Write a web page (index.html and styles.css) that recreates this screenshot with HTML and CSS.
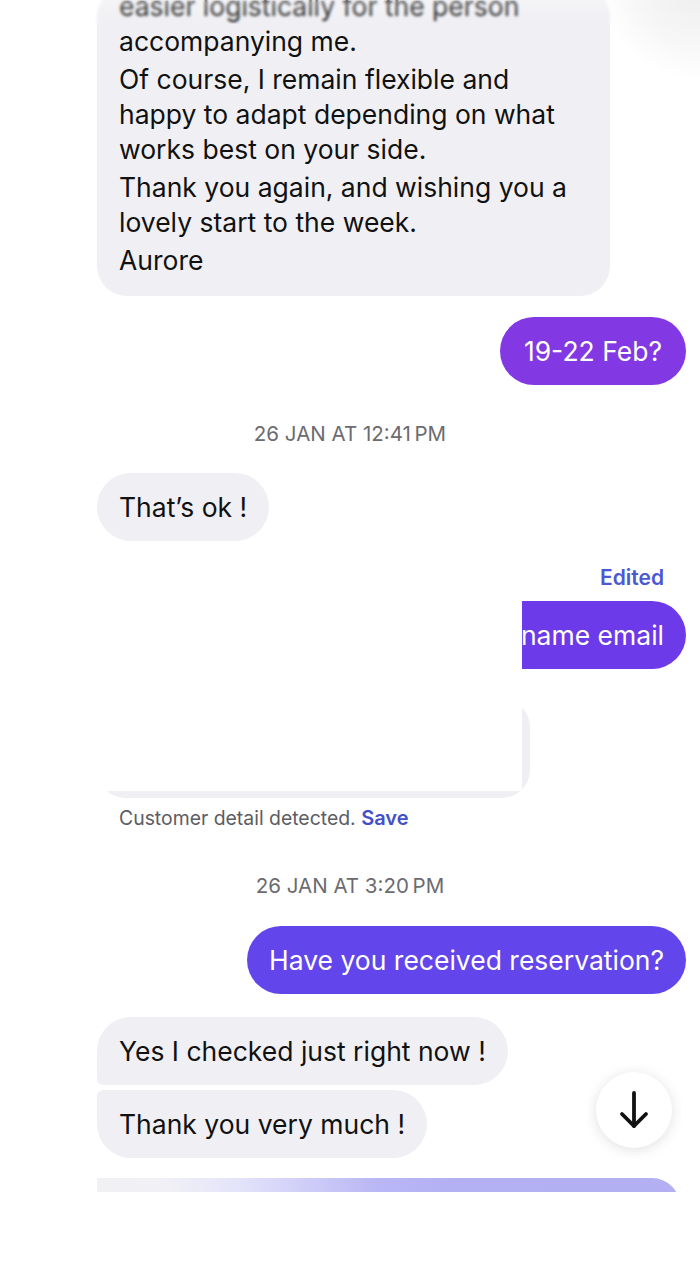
FILE: index.html
```html
<!DOCTYPE html>
<html lang="en">
<head>
    <meta charset="UTF-8">
    <meta name="viewport" content="width=device-width, initial-scale=1.0">
    <title>Conversation</title>
    <link rel="stylesheet" href="styles.css">
</head>
<body>
    <div class="screen">
        <div class="thread">
            <!-- long incoming message, scrolled past its top -->
            <div class="row in">
                <div class="bubble gray long">
                    <p>easier logistically for the person accompanying me.</p>
                    <p>Of course, I remain flexible and happy to adapt depending on what works best on your side.</p>
                    <p>Thank you again, and wishing you a lovely start to the week.</p>
                    <p>Aurore</p>
                </div>
            </div>

            <div class="row out">
                <div class="bubble violet">19-22 Feb?</div>
            </div>

            <div class="stamp">26 JAN AT 12:41&thinsp;PM</div>

            <div class="row in">
                <div class="bubble gray">That’s ok !</div>
            </div>

            <div class="hidden-block">
                <div class="edited">Edited</div>
                <div class="row out">
                    <div class="bubble purple">First name last name email</div>
                </div>
                <div class="row in">
                    <div class="card"></div>
                </div>
                <!-- private details covered -->
                <div class="cover"></div>
            </div>

            <div class="detected">Customer detail detected. <a href="#">Save</a></div>

            <div class="stamp second">26 JAN AT 3:20&thinsp;PM</div>

            <div class="row out">
                <div class="bubble indigo">Have you received reservation?</div>
            </div>

            <div class="row in after-out">
                <div class="bubble gray first">Yes I checked just right now !</div>
            </div>
            <div class="row in tight">
                <div class="bubble gray last">Thank you very much !</div>
            </div>

            <div class="row in">
                <div class="bubble fade"></div>
            </div>
        </div>

        <div class="top-blur"></div>
        <div class="top-shadow"></div>

        <button class="scroll-down" aria-label="Scroll to bottom">
            <svg width="34" height="40" viewBox="0 0 34 40" fill="none" stroke="#111" stroke-width="3.8" stroke-linecap="round" stroke-linejoin="round">
                <path d="M17 3 V36"/>
                <path d="M5 24 L17 36 L29 24"/>
            </svg>
        </button>
    </div>
    <div class="footer"></div>
</body>
</html>
```

FILE: styles.css
```css
body {
    margin: 0;
    padding: 0;
    background-color: #ffffff;
    font-family: Inter, "Noto Sans", sans-serif;
    color: #111111;
}

.screen {
    position: relative;
    height: 1192px;
    overflow: hidden;
}

.thread {
    display: flex;
    flex-direction: column;
    padding: 0 14px 0 97px;
    margin-top: -34px;
}

.row {
    display: flex;
    margin-top: 21px;
}

.row.in {
    justify-content: flex-start;
}

.row.out {
    justify-content: flex-end;
}

.row.after-out {
    margin-top: 23px;
}

.row.tight {
    margin-top: 5px;
}

.bubble {
    font-size: 26.5px;
    line-height: 34px;
    padding: 17px 22px;
    border-radius: 34px;
    white-space: nowrap;
}

.bubble.gray {
    background-color: #f0f0f4;
}

.bubble.violet {
    background-color: #8239e3;
    color: #fff;
    padding: 17px 24px;
}

.bubble.purple {
    background-color: #6c3ae8;
    color: #fff;
}

.bubble.indigo {
    background-color: #6346eb;
    color: #fff;
}

.bubble.long {
    width: 469px;
    white-space: normal;
    line-height: 35px;
    border-radius: 30px;
    padding: 2px 22px 18px;
}

.bubble.long p {
    margin: 0 0 3px;
}

.bubble.long p:last-child {
    margin-bottom: 0;
}

.bubble.first {
    border-bottom-left-radius: 6px;
}

.bubble.last {
    border-top-left-radius: 6px;
}

.bubble.fade {
    width: 583px;
    height: 60px;
    padding: 0;
    border-radius: 0 28px 0 0;
    margin-top: -1px;
    background: linear-gradient(90deg, #f1f1f4 0%, #f0f0f6 12%, #e4e4fa 24%, #cfcdf8 36%, #b9b7f5 48%, #b3b1f4 60%, #b2b0f3 100%);
}

.stamp {
    text-align: center;
    font-size: 20.5px;
    line-height: 24px;
    color: #6b6b70;
    margin: 37px -14px 6px -97px;
}

.stamp.second {
    margin-top: 44px;
    margin-bottom: 7px;
}

.hidden-block {
    position: relative;
    margin-top: 25px;
}

.edited {
    text-align: right;
    font-size: 21px;
    line-height: 24px;
    font-weight: 600;
    color: #4b58d4;
    padding-right: 22px;
}

.hidden-block .row.out {
    margin-top: 11px;
}

.hidden-block .row.in {
    margin-top: 30px;
}

.card {
    width: 433px;
    height: 99px;
    background-color: #f0f0f4;
    border-radius: 28px;
}

.cover {
    position: absolute;
    left: -97px;
    right: 164px;
    top: 28px;
    bottom: 7px;
    background-color: #ffffff;
}

.detected {
    font-size: 19.4px;
    line-height: 24px;
    color: #5c5c62;
    margin: 8px 0 0 22px;
}

.detected a {
    color: #4350c9;
    font-weight: 600;
    font-size: 20px;
    text-decoration: none;
}

.top-blur {
    position: absolute;
    top: 0;
    left: 0;
    right: 0;
    height: 24px;
    backdrop-filter: blur(1.6px);
    background: linear-gradient(180deg, rgba(255, 255, 255, 0.3), rgba(255, 255, 255, 0));
}

/* soft shade cast by the header above */
.top-shadow {
    position: absolute;
    top: -40px;
    left: 600px;
    width: 160px;
    height: 120px;
    background: radial-gradient(ellipse at 60% 20%, rgba(0, 0, 0, 0.07), rgba(0, 0, 0, 0.03) 45%, rgba(0, 0, 0, 0) 70%);
}

.scroll-down {
    position: absolute;
    left: 596px;
    top: 1072px;
    width: 76px;
    height: 76px;
    border: none;
    border-radius: 50%;
    background-color: #ffffff;
    box-shadow: 0 2px 14px rgba(0, 0, 0, 0.12);
    display: flex;
    align-items: center;
    justify-content: center;
    padding: 0;
}

.footer {
    height: 88px;
    background-color: #ffffff;
}
```
